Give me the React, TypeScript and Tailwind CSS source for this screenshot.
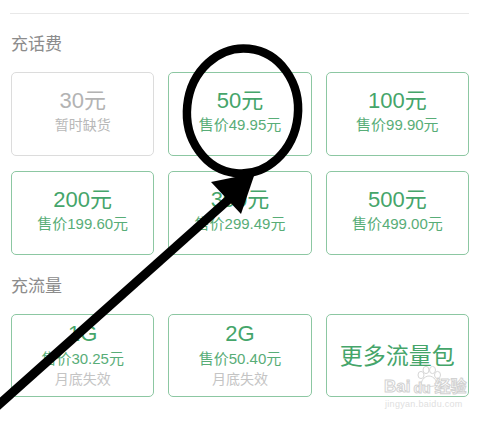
import React from "react";

type Item = { main: string; sub?: string; note?: string; disabled?: boolean; big?: boolean };

const font = "font-['Liberation_Sans','Noto_Sans_CJK_SC',sans-serif]";

function Card({ item, compact }: { item: Item; compact?: boolean }) {
  if (item.big) {
    return (
      <div className="h-[83px] rounded-[5px] border border-[#8cc7a2] flex items-center justify-center">
        <span className="text-[23px] leading-[28px] text-[#45a56a]">{item.main}</span>
      </div>
    );
  }
  const disabled = item.disabled;
  return (
    <div
      className={`rounded-[5px] border flex flex-col items-center ${compact ? "h-[83px] pt-[6px]" : "h-[84px] pt-[15px]"} ${
        disabled ? "border-[#dcdcdc]" : "border-[#8cc7a2]"
      }`}
    >
      <span className={`text-[22px] leading-[26px] ${disabled ? "text-[#b3b3b3]" : "text-[#45a56a]"}`}>{item.main}</span>
      <span
        className={`${compact ? "mt-[2px]" : "mt-[1px]"} leading-[20px] ${
          disabled ? "text-[14px] text-[#b8b8b8]" : "text-[15px] text-[#58ad77]"
        }`}
      >
        {item.sub}
      </span>
      {item.note && <span className="text-[14px] leading-[20px] text-[#c4c4c4]">{item.note}</span>}
    </div>
  );
}

export default function App() {
  const phone: Item[] = [
    { main: "30元", sub: "暂时缺货", disabled: true },
    { main: "50元", sub: "售价49.95元" },
    { main: "100元", sub: "售价99.90元" },
    { main: "200元", sub: "售价199.60元" },
    { main: "300元", sub: "售价299.49元" },
    { main: "500元", sub: "售价499.00元" },
  ];
  const data: Item[] = [
    { main: "1G", sub: "售价30.25元", note: "月底失效" },
    { main: "2G", sub: "售价50.40元", note: "月底失效" },
    { main: "更多流量包", big: true },
  ];
  return (
    <div className={`relative w-[504px] h-[422px] overflow-hidden bg-white ${font}`}>
      <div className="pl-[11px] w-[469px]">
        <div className="h-[14px] border-b border-[#e8e8e8] -ml-[1px]" />
        <div className="mt-[21px] text-[17px] leading-[20px] text-[#8c8c8c]">充话费</div>
        <div className="mt-[17px] grid grid-cols-3 gap-x-[14px] gap-y-[15px]">
          {phone.map((p) => (
            <Card key={p.main} item={p} />
          ))}
        </div>
        <div className="mt-[22px] text-[17px] leading-[20px] text-[#8c8c8c]">充流量</div>
        <div className="mt-[17px] grid grid-cols-3 gap-x-[14px]">
          {data.map((p) => (
            <Card key={p.main} item={p} compact />
          ))}
        </div>
      </div>

      {/* Baidu watermark */}
      <div className="absolute left-[384px] top-[366px] w-[92px] h-[44px] pointer-events-none">
        <svg className="absolute left-[30px] top-0" width="30" height="22" viewBox="0 0 30 22">
          <g fill="white" stroke="#d6d6d6" strokeWidth="1">
            <ellipse cx="7" cy="9" rx="3" ry="3.6" />
            <ellipse cx="12" cy="4" rx="3" ry="3.6" />
            <ellipse cx="18.5" cy="4" rx="3" ry="3.6" />
            <ellipse cx="23.5" cy="9" rx="3" ry="3.6" />
            <path d="M15 10 C10 10 6 16 8 19 C10 21 20 21 22 19 C24 16 20 10 15 10 Z" />
          </g>
        </svg>
        <div className="absolute left-0 top-[12px] flex items-end">
          <span className="text-[17px] leading-[18px] font-bold text-white [-webkit-text-stroke:1px_#d2d2d2]">Bai</span>
          <span className="ml-[3px] text-[14px] leading-[16px] font-bold text-white [-webkit-text-stroke:1px_#d2d2d2]">du</span>
          <span className="ml-[4px] text-[16px] leading-[18px] font-bold text-white [-webkit-text-stroke:1px_#d2d2d2]">经验</span>
        </div>
        <div className="absolute left-[1px] top-[33px] text-[9px] leading-[10px] text-[#e0e0e0] tracking-[0.3px]">jingyan.baidu.com</div>
      </div>

      {/* Hand-drawn annotation */}
      <svg className="absolute inset-0 pointer-events-none" width="504" height="422" viewBox="0 0 504 422">
        <ellipse cx="242.5" cy="111" rx="55.5" ry="62.5" fill="none" stroke="#000" strokeWidth="8.5" transform="rotate(6 242.5 111)" />
        <line x1="-6" y1="409" x2="236" y2="193" stroke="#000" strokeWidth="9" />
        <polygon points="211,182 255,173 241,214" fill="#000" />
      </svg>
    </div>
  );
}
